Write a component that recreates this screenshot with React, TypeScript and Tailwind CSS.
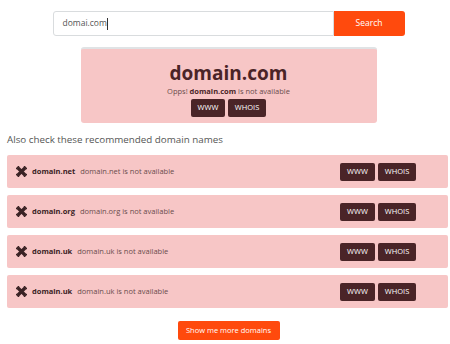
import React from "react";

const rows = [
  { name: "domain.net" },
  { name: "domain.org" },
  { name: "domain.uk" },
  { name: "domain.uk" },
];

function XIcon() {
  return (
    <svg width="11" height="11" viewBox="0 0 10 10" className="shrink-0">
      <path d="M1.6 1.6 L8.4 8.4 M8.4 1.6 L1.6 8.4" stroke="#3a2224" strokeWidth="3" strokeLinecap="butt" />
      <path d="M0.5 2.3 L2.3 0.5 M7.7 0.5 L9.5 2.3 M9.5 7.7 L7.7 9.5 M2.3 9.5 L0.5 7.7" stroke="#3a2224" strokeWidth="1.2" strokeLinecap="round" />
    </svg>
  );
}

function Btn({ children, w }: { children: React.ReactNode; w: string }) {
  return (
    <span className={`flex h-[18px] ${w} items-center justify-center rounded-[2px] bg-[#4a2427] text-[7.5px] text-white`}>
      {children}
    </span>
  );
}

export default function App() {
  return (
    <div className="w-[450px] h-[344px] bg-white pl-[7px] pr-[2px] pt-[11px] font-['Open_Sans',sans-serif] overflow-hidden">
      <div className="flex justify-center pl-[2px]">
        <div className="flex w-[352px] h-[25px]">
          <div className="flex-1 flex items-center border border-[#d9dcde] rounded-l-[3px] px-[9px] text-[8.5px] text-[#555]">
            domai.com<span className="w-px h-[12px] bg-[#333]"></span>
          </div>
          <div className="w-[71px] bg-[#ff4a0d] rounded-r-[3px] flex items-center justify-center text-white text-[8.5px]">
            Search
          </div>
        </div>
      </div>
      <div className="flex justify-center mt-[11px] pl-[2px]">
        <div className="w-[296px] h-[76px] bg-[#f7c6c6] rounded-[3px] border-t-[2px] border-[#e0e3e5] flex flex-col items-center pt-[12px]">
          <div className="text-[19px] leading-[24px] font-bold text-[#4a2427]">domain.com</div>
          <div className="text-[7.5px] leading-[11px] text-[#6a4c4c] mt-[1px]">
            Opps! <b className="text-[#4a2427]">domain.com</b> is not available
          </div>
          <div className="flex gap-[3px] mt-[2px]">
            <Btn w="w-[34px]">WWW</Btn>
            <Btn w="w-[38px]">WHOIS</Btn>
          </div>
        </div>
      </div>
      <div className="mt-[9px] text-[9.8px] leading-[16px] text-[#555]">
        Also check these recommended domain names
      </div>
      <div className="mt-[7px] flex flex-col gap-[7px]">
        {rows.map((r, i) => (
          <div key={i} className="h-[33px] bg-[#f7c6c6] rounded-[2px] flex items-center pl-[9px] pr-[32px]">
            <XIcon />
            <span className="ml-[5px] text-[7.5px] font-bold text-[#3a2224]">{r.name}</span>
            <span className="ml-[5px] text-[7.5px] text-[#6a4c4c]">{r.name} is not available</span>
            <div className="ml-auto flex gap-[3px]">
              <Btn w="w-[35px]">WWW</Btn>
              <Btn w="w-[38px]">WHOIS</Btn>
            </div>
          </div>
        ))}
      </div>
      <div className="flex justify-center mt-[13px] pl-[2px]">
        <div className="w-[102px] h-[19px] bg-[#ff4a0d] rounded-[2px] flex items-center justify-center text-white text-[7.5px]">
          Show me more domains
        </div>
      </div>
    </div>
  );
}
